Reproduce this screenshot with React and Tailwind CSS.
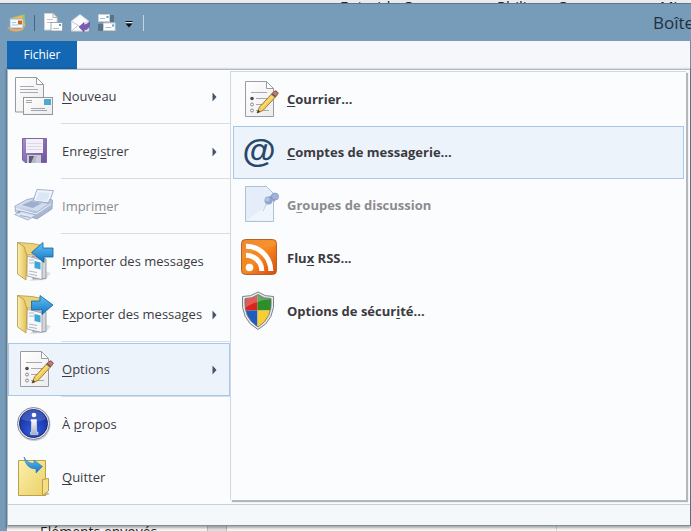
import React, { useState } from 'react'

const iconCls = 'block w-10 h-[41px] shrink-0'

function Gradients() {
  return (
    <svg className="absolute w-0 h-0" aria-hidden="true">
      <defs>
        <linearGradient id="paper" x1="0" y1="0" x2="1" y2="1">
          <stop offset="0" stopColor="#ffffff" /><stop offset="1" stopColor="#ececef" />
        </linearGradient>
        <linearGradient id="folder" x1="0" y1="0" x2="1" y2="0">
          <stop offset="0" stopColor="#fbeeb0" /><stop offset="1" stopColor="#e3bf4e" />
        </linearGradient>
        <linearGradient id="folderTall" x1="0" y1="0" x2="1" y2="1">
          <stop offset="0" stopColor="#fbf0ae" /><stop offset="1" stopColor="#ecd067" />
        </linearGradient>
        <linearGradient id="arrow" x1="0" y1="0" x2="0" y2="1">
          <stop offset="0" stopColor="#5fc4f4" /><stop offset="1" stopColor="#1674c4" />
        </linearGradient>
        <linearGradient id="purple" x1="0" y1="0" x2="1" y2="1">
          <stop offset="0" stopColor="#a58ccb" /><stop offset="1" stopColor="#6f529f" />
        </linearGradient>
        <linearGradient id="printer" x1="0" y1="0" x2="1" y2="1">
          <stop offset="0" stopColor="#dfe6f4" /><stop offset="1" stopColor="#95a4c6" />
        </linearGradient>
        <linearGradient id="rss" x1="0" y1="0" x2="1" y2="1">
          <stop offset="0" stopColor="#ea7d20" /><stop offset="0.5" stopColor="#f58a22" /><stop offset="1" stopColor="#d9480c" />
        </linearGradient>
        <radialGradient id="info" cx="0.5" cy="0.75" r="0.75">
          <stop offset="0" stopColor="#2f5fe0" /><stop offset="1" stopColor="#152a94" />
        </radialGradient>
        <linearGradient id="silver" x1="0" y1="0" x2="0" y2="1">
          <stop offset="0" stopColor="#ffffff" /><stop offset="1" stopColor="#a9adba" />
        </linearGradient>
      </defs>
    </svg>
  )
}

const NewIcon = () => (
  <svg viewBox="0 0 40 41" className={iconCls}>
    <path d="M1.500 1.500H22.500L29.500 8.500V36H1.500Z" fill="url(#paper)" stroke="#9a9a9e" />
    <path d="M22.500 1.500V8.500H29.500Z" fill="#fff" stroke="#9a9a9e" />
    <path d="M6 10.500H20M6 13.500H24M6 16.500H24" stroke="#aaaab0" />
    <rect x="9.500" y="21.500" width="29" height="17" fill="url(#paper)" stroke="#97979b" />
    <rect x="30" y="23" width="7" height="6" fill="#4fa9cb" />
    <path d="M12 24.500h6M12 26.500h6M17 32.500h14M17 34.500h16" stroke="#a4a4a8" />
  </svg>
)

const SaveIcon = () => (
  <svg viewBox="0 0 40 41" className={iconCls}>
    <path d="M8.500 7.500H32.500V31.500H11L8.500 29Z" fill="url(#purple)" stroke="#7d66a5" />
    <rect x="12" y="8" width="17" height="14" fill="#f3f1f7" />
    <path d="M13 12.500h15M13 15.500h15M13 18.500h15" stroke="#dcd8e4" />
    <rect x="13" y="24" width="14" height="8" fill="#c9cbd6" />
    <rect x="15" y="25" width="6" height="7" fill="#5c5876" />
    <path d="M17 32L20 25h3l-2 7z" fill="#b6b8c6" />
  </svg>
)

const PrinterIcon = () => (
  <svg viewBox="0 0 40 41" className={iconCls}>
    <path d="M23 3.500L39.500 4.500L35 17L19 15Z" fill="#eef4fc" stroke="#a3b0cc" />
    <path d="M25 6l11 1-3 8-11-1z" fill="#dbe6f6" />
    <path d="M1 20L13 13.500L20 12L19 15L34 17L36 13L38.500 14L38 23L23 33L1.500 26Z" fill="url(#printer)" stroke="#97a5c4" strokeWidth="0.800" />
    <path d="M2 20L14 14L34 18L23 25.500Z" fill="#cfdaed" />
    <path d="M8 19l9-4 11 2-9 5z" fill="#9fadce" />
    <path d="M2 22.500L22 28L37 18" fill="none" stroke="#eef3fb" />
    <path d="M4 25l15 4v3L4 28z" fill="#7f8eb3" />
    <path d="M0.500 28.500L8 25.500L22 29L14 34Z" fill="#dbe6f6" stroke="#9aa8c8" strokeWidth="0.800" />
    <path d="M6 29.500l10 2" stroke="#9daccb" />
  </svg>
)

function TransferIcon({ out }) {
  return (
    <svg viewBox="0 0 40 41" className={iconCls}>
      <path d="M30 30l7 2-6 7-16 1z" fill="#dfe1e5" />
      <path d="M3.500 1.500L18 2.500L26 4V14H9Z" fill="#ecd279" stroke="#b29649" strokeWidth="0.800" />
      <path d="M18 15L32 18V37.500L19 38Z" fill="#d4d6dc" stroke="#8c8e97" strokeWidth="0.800" />
      <path d="M13 15L28 19V38.500L13 35Z" fill="#f7f8fa" stroke="#94969f" strokeWidth="0.800" />
      <path d="M15 19h5M15 22h5M15 30l8 1.500M15 33l8 1.500" stroke="#b3b6c0" />
      <path d="M20.500 20l6 1.500v7l-6-1.500z" fill="#3aa7d4" />
      <path d="M3.500 1.500L10 5.500L13 15L12 39L3.500 33Z" fill="url(#folder)" stroke="#b29649" strokeWidth="0.800" />
      {out ? (
        <path d="M17.500 7L26 7V1.500L39 11L28 20.500V15.500L17.500 16Z" fill="url(#arrow)" stroke="#17609c" strokeWidth="0.800" />
      ) : (
        <path d="M17.500 11.500L29 1.500V7H39V16H30V21.500Z" fill="url(#arrow)" stroke="#17609c" strokeWidth="0.800" />
      )}
    </svg>
  )
}

const OptionsIcon = () => (
  <svg viewBox="0 0 40 41" className={iconCls}>
    <path d="M6.500 2.500H27.500L34.500 9.500V37.500H6.500Z" fill="url(#paper)" stroke="#9b9ba0" />
    <path d="M27.500 2.500V9.500H34.500Z" fill="#fff" stroke="#9b9ba0" />
    <path d="M12 13.500H28M17 19.500H30M17 25.500H24M17 31.500H21M24 31.500H30" stroke="#a7a7ac" />
    <circle cx="13" cy="19.500" r="1.800" fill="#4c4c52" />
    <circle cx="13" cy="25.500" r="1.500" fill="none" stroke="#8b8b90" />
    <circle cx="13" cy="31.500" r="1.500" fill="none" stroke="#8b8b90" />
    <path d="M18 34L20.500 28L33 14.500L37 17.500L24 31.500Z" fill="#f3cd56" stroke="#8a6a24" strokeWidth="0.800" />
    <path d="M22 29L35 15.500" stroke="#fdeb9c" />
    <path d="M18 34l1.200-3 2 2z" fill="#3b332b" />
    <path d="M33 14.500l2-2q2-1.500 3.500 0.500t0 2.500L37 17.500z" fill="#c9776b" stroke="#6b4540" strokeWidth="0.800" />
    <path d="M32.500 15l4 3" stroke="#5d6168" strokeWidth="1.500" />
  </svg>
)

const InfoIcon = () => (
  <svg viewBox="0 0 40 41" className={iconCls}>
    <circle cx="20" cy="20.500" r="16.500" fill="#c9cbd2" />
    <circle cx="19.500" cy="19.500" r="16" fill="#e3e5ec" stroke="#85889a" />
    <circle cx="19.500" cy="19.500" r="14" fill="url(#info)" stroke="#1c2a78" />
    <path d="M7 15a13 13 0 0 1 25 0q-12 6-25 0z" fill="#5d7ad4" opacity="0.500" />
    <circle cx="20" cy="11" r="2.300" fill="#fff" />
    <path d="M17 15.500h5.500v12.500h1.500v2.500h-7.500V28H17.500V17.500H17z" fill="url(#silver)" stroke="#f4f5f9" strokeWidth="0.500" />
  </svg>
)

const QuitIcon = () => (
  <svg viewBox="0 0 40 41" className={iconCls}>
    <path d="M31 34l5 3-6 2z" fill="#b9bac0" />
    <path d="M4.500 3.500H31.500V38.500H4.500Z" fill="url(#folderTall)" stroke="#bd9f4a" />
    <path d="M28.500 22.500L34.500 21.500V34L28.500 38.500Z" fill="#f5de84" stroke="#bd9f4a" />
    <path d="M10 0Q13 6 20 6.500V3L28.500 9.500L22 16V12Q12 12 10 0Z" fill="url(#arrow)" stroke="#2a80b4" strokeWidth="0.600" />
  </svg>
)

const AtIcon = () => (
  <span
    className={`${iconCls} text-center font-['Liberation_Sans',sans-serif] text-[34px] leading-9 font-bold text-[#27486b]`}
    aria-hidden="true"
  >
    @
  </span>
)

const GroupsIcon = () => (
  <svg viewBox="0 0 40 41" className={iconCls}>
    <path d="M6.500 1.500H27.500L34.500 8.500V36.500H6.500Z" fill="#e4edf9" stroke="#b3bfd8" />
    <path d="M34 36L8 35L34 16z" fill="#eff5fd" />
    <path d="M24 26L28 18" stroke="#c4cde0" />
    <circle cx="29.500" cy="15.500" r="4" fill="#93a6cf" />
    <circle cx="28.500" cy="14.500" r="2" fill="#b5c4e4" />
    <path d="M30 12L35 8l4 4-4 5z" fill="#8a9ec9" />
    <circle cx="36" cy="11.500" r="3.500" fill="#a3b3d8" stroke="#8799c2" strokeWidth="0.800" />
  </svg>
)

const RssIcon = () => (
  <svg viewBox="0 0 40 41" className={iconCls}>
    <rect x="2.500" y="1.500" width="35" height="35" rx="4" fill="url(#rss)" stroke="#b5612c" />
    <path d="M3 22V6q0-4 4-4h26q4 0 4 4v2Q18 9 3 22z" fill="#ffb45e" opacity="0.200" />
    <circle cx="10.500" cy="29.500" r="3.800" fill="#fff" />
    <path d="M7 17.200A15.800 15.800 0 0 1 22.800 33" fill="none" stroke="#fff" strokeWidth="5" />
    <path d="M7 8.200A24.800 24.800 0 0 1 31.800 33" fill="none" stroke="#fff" strokeWidth="5" />
  </svg>
)

const ShieldIcon = () => (
  <svg viewBox="0 0 40 41" className={iconCls}>
    <clipPath id="shieldClip"><path d="M19 3.500Q25 8 32 7.500Q34 27 19 36Q4 27 6 7.500Q13 8 19 3.500Z" /></clipPath>
    <path d="M19 1Q26 6 34.500 5.500Q37 29 19 38.500Q1 29 3.500 5.500Q12 6 19 1Z" fill="#e9ebee" stroke="#7d8188" />
    <g clipPath="url(#shieldClip)">
      <path d="M3 3h15.500v16.500H3z" fill="#d8261f" />
      <path d="M18.500 3H36v16.500H18.500z" fill="#2c8f2a" />
      <path d="M3 19.500h15.500V38H3z" fill="#1f5cbd" />
      <path d="M18.500 19.500H36V38H18.500z" fill="#f7cf35" />
      <path d="M3 3h33v5Q18 8 3 19z" fill="#fff" opacity="0.250" />
    </g>
    <path d="M19 3.500Q25 8 32 7.500Q34 27 19 36Q4 27 6 7.500Q13 8 19 3.500Z" fill="none" stroke="#6c6f74" strokeWidth="0.800" />
  </svg>
)

// the middle part of each text is its access key
const MENU = [
  { id: 'new', text: ['', 'N', 'ouveau'], Icon: NewIcon, sub: true, sep: true },
  { id: 'save', text: ['Enregi', 's', 'trer'], Icon: SaveIcon, sub: true, sep: true },
  { id: 'print', text: ['Impri', 'm', 'er'], Icon: PrinterIcon, disabled: true, sep: true },
  { id: 'import', text: ['', 'I', 'mporter des messages'], Icon: TransferIcon },
  { id: 'export', text: ['E', 'x', 'porter des messages'], Icon: () => <TransferIcon out />, sub: true, sep: true },
  { id: 'options', text: ['', 'O', 'ptions'], Icon: OptionsIcon, sub: true, sep: true },
  { id: 'about', text: ['À ', 'p', 'ropos'], Icon: InfoIcon },
  { id: 'quit', text: ['', 'Q', 'uitter'], Icon: QuitIcon },
]

const OPTIONS = [
  { id: 'mail', text: ['', 'C', 'ourrier...'], Icon: OptionsIcon },
  { id: 'accounts', text: ['', 'C', 'omptes de messagerie...'], Icon: AtIcon },
  { id: 'groups', text: ['G', 'r', 'oupes de discussion'], Icon: GroupsIcon, disabled: true },
  { id: 'rss', text: ['Flu', 'x', ' RSS...'], Icon: RssIcon },
  { id: 'security', text: ['Options de sécur', 'i', 'té...'], Icon: ShieldIcon },
]

function MenuItem({ item, active, bold, onHover }) {
  const { text, Icon, sub, disabled } = item
  return (
    <button
      type="button"
      role="menuitem"
      disabled={disabled}
      onMouseEnter={onHover}
      className={`flex w-full h-[53px] items-center gap-2 pl-[5px] pr-3 border text-left text-[13px] whitespace-nowrap
        ${active ? 'bg-[#edf3fb] border-[#a9c7e6]' : 'border-transparent'}
        ${bold ? 'font-bold' : ''}
        ${disabled ? 'text-[#8b8b8f]' : 'text-[#3b3b3f]'}`}
    >
      <Icon />
      <span className="flex-1 pt-px">
        {text[0]}<u className="underline-offset-2">{text[1]}</u>{text[2]}
      </span>
      {sub && (
        <svg viewBox="0 0 5 10" className="w-[5px] h-[10px] shrink-0"><path d="M0.500 0.500L4.500 5L0.500 9.500Z" fill="#44546a" /></svg>
      )}
    </button>
  )
}

function TitleBar() {
  return (
    <header className="flex h-[38px] items-center pl-[7px] bg-[#779cb9] border-t border-[#5f7688]">
      <svg viewBox="0 0 20 20" className="w-5 h-5">
        <path d="M3 5L17.500 1l1 12-4 2z" fill="#9fbd77" />
        <path d="M2 6L15 2.500l3 10-5 3z" fill="#f0b95c" />
        <rect x="3" y="6" width="13" height="9" fill="#f4f8fd" stroke="#7fa9cf" strokeWidth="0.700" />
        <rect x="11" y="7.500" width="4" height="4" fill="#c96b1f" />
        <path d="M5 9.500h4M5 12h6" stroke="#a9c7e6" />
        <path d="M0 13q3 3 10 3 6 0 8-3-1 5-8 5.500Q2 19 0 13z" fill="#eea95a" />
      </svg>
      <span className="w-px h-4 ml-[7px] mr-[9px] bg-[#46657f]" />
      <div className="flex items-center gap-[7px]">
        <button type="button" aria-label="Nouveau message">
          <svg viewBox="0 0 20 20" className="block w-5 h-5">
            <path d="M0.500 0.500H9L13 4.500V17H0.500Z" fill="#fdfdfd" stroke="#d0d4da" />
            <path d="M9 0.500V4.500H13" fill="none" stroke="#a9adb5" />
            <path d="M3 6.500h6M3 9.500h6" stroke="#c3c6cc" />
            <rect x="7" y="9.500" width="11.500" height="8.500" fill="#fff" stroke="#8b97a5" strokeWidth="0.800" />
            <rect x="15" y="11" width="2" height="2" fill="#4fa9cb" />
            <path d="M9 15.500h6" stroke="#b9bcc3" />
          </svg>
        </button>
        <button type="button" aria-label="Répondre">
          <svg viewBox="0 0 20 20" className="block w-5 h-5">
            <path d="M0.500 8L9 1.500L17.500 8V18H0.500Z" fill="#fafbfc" stroke="#d5d8de" />
            <path d="M1 8.500l8 5 8-5M1 17.500l6-5M17 17.500l-6-5" fill="none" stroke="#c6cad1" />
            <path d="M8 14l5-4.500v2.500q3-0.500 5.500-3 0.500 8-5.500 8v2z" fill="#7d5bb5" stroke="#6a4ba3" strokeWidth="0.600" />
          </svg>
        </button>
        <button type="button" aria-label="Envoyer et recevoir">
          <svg viewBox="1 0 20 20" className="block w-5 h-5">
            <path d="M13 2h4v7h-4zM1 11h5v7H1z" fill="#5c7387" />
            <rect x="1.500" y="1.500" width="11" height="7" fill="#fff" stroke="#c9ced6" />
            <rect x="6.500" y="10" width="11.500" height="7.500" fill="#fff" stroke="#c9ced6" />
            <path d="M3 5.500h5M8.500 14.500h6" stroke="#b3b8c1" />
            <path d="M9.500 3h2v2h-2zM15 11.500h2v2h-2z" fill="#4fa9cb" />
          </svg>
        </button>
        <button type="button" aria-label="Personnaliser">
          <svg viewBox="0 0 8 20" className="block w-2 h-5">
            <path d="M0.500 8.500h7" stroke="#111" /><path d="M0.500 10.500h7L4 14.500z" fill="#111" />
            <path d="M0.500 9.500h7" stroke="#dfe8ef" />
          </svg>
        </button>
      </div>
      <span className="w-px h-4 ml-[10px] bg-[#c3d3e0]" />
      <h1 className="ml-auto w-[38px] text-[17px] text-[#20303f] whitespace-nowrap">Boîte</h1>
    </header>
  )
}

export default function App() {
  const [active, setActive] = useState('options')
  const [option, setOption] = useState('accounts')

  return (
    <div className="relative min-h-screen max-h-screen overflow-hidden flex flex-col bg-[#779cb9] font-['Open_Sans','Noto_Sans',sans-serif]">
      <Gradients />

      {/* Strip of the window behind */}
      <div className="flex h-[3px] shrink-0 overflow-hidden justify-end bg-[#e9ebee] text-[15px] leading-3 text-[#222] whitespace-nowrap">
        <span className="w-[157px] shrink-0">Entraide C</span>
        <span className="w-[163px] shrink-0">Philippe C</span>
        <span className="w-[31px] shrink-0">Mi</span>
      </div>

      <TitleBar />

      <main className="ml-[7px] border-r border-[#7389a3] shrink-0">
        <div className="h-7 bg-[#f5f7fa]">
          <button type="button" className="h-7 w-[70px] bg-[#1467b3] text-white text-[12px]">Fichier</button>
        </div>

        <div className="relative border-t border-l border-[#aebac4] border-b border-b-[#7e929c] bg-[#fbfcfe] shadow-[0_1px_2px_1px_rgba(0,0,0,0.3)]">
          <div className="flex h-[434px]">
            <div role="menu" aria-label="Fichier" className="w-[222px] shrink-0">
              {MENU.map(item => (
                <div key={item.id}>
                  <MenuItem item={item} active={item.id === active} onHover={() => setActive(item.id)} />
                  {item.sep && <div className="h-0.5 ml-[53px] border-t border-[#d3dce7]" />}
                </div>
              ))}
            </div>

            <div
              role="menu"
              aria-label="Options"
              className="flex-1 mt-px mr-1 mb-1 pt-px pr-0.5 border-t border-l border-[#d3d8de] bg-[#fbfcfe] pl-0.5
                shadow-[2px_2px_1px_#b4b8bb]"
            >
              {OPTIONS.map(item => (
                <MenuItem key={item.id} item={item} bold active={item.id === option} onHover={() => setOption(item.id)} />
              ))}
            </div>
          </div>
          <div className="h-[21px] bg-[#f5f8fa] border-t border-[#c7cfda]" />
        </div>
      </main>

      {/* Folder list of the window below */}
      <div className="flex-1 ml-[7px] flex bg-[#f4f5f6] text-[14px] leading-3 text-[#222]">
        <span className="w-[200px] h-1 pl-[33px] whitespace-nowrap">Éléments envoyés</span>
        <span className="w-5 bg-[#dcdee0] border-x border-[#b9bcbf]" />
        <span className="w-[330px] border-r border-[#d3d7db]" />
      </div>
    </div>
  )
}
